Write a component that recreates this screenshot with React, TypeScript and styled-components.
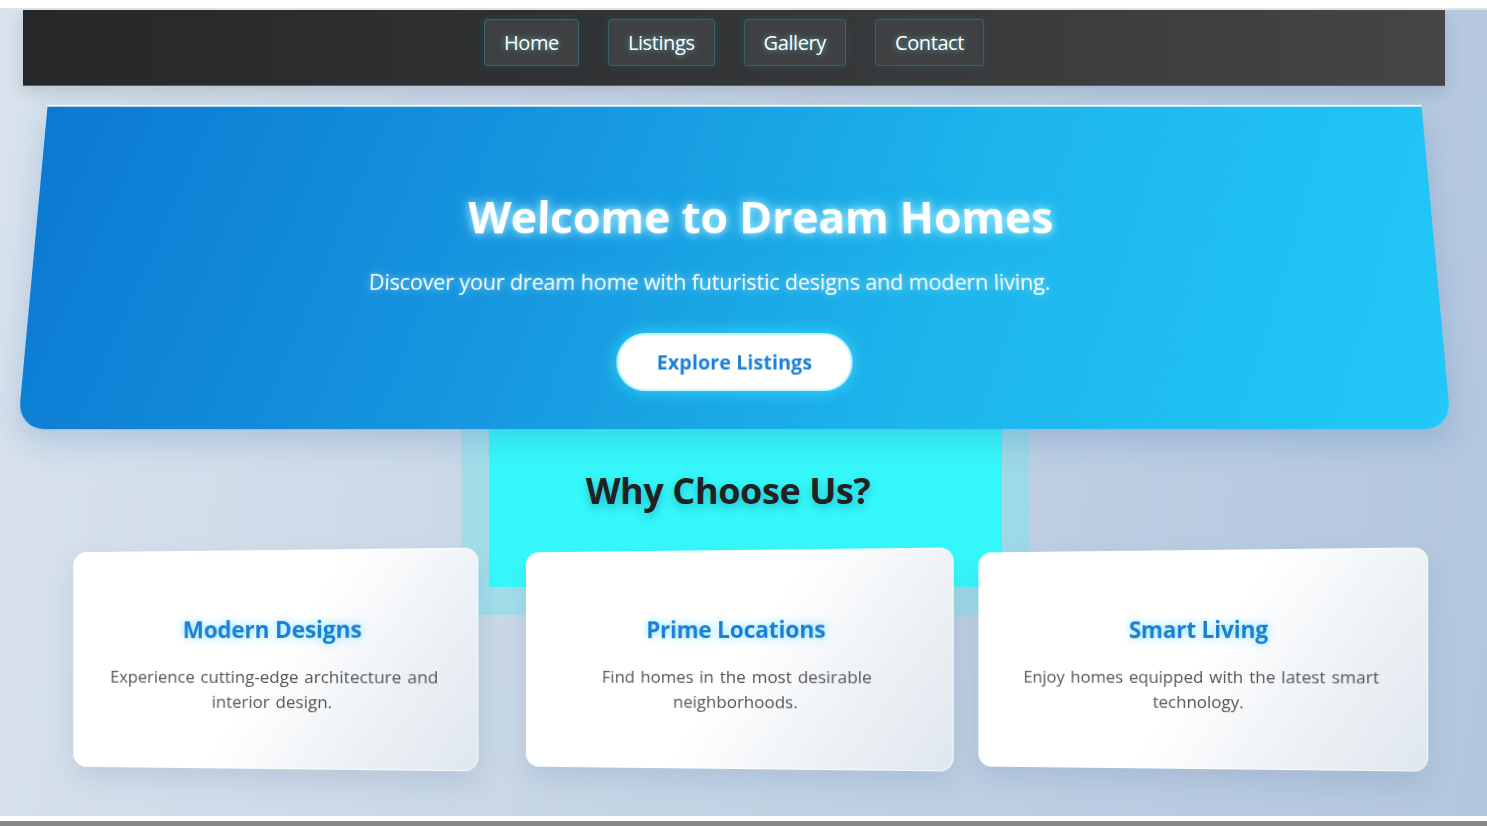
import React from "react";
import styled, { createGlobalStyle } from "styled-components";

const GlobalStyle = createGlobalStyle`
  html, body {
    margin: 0;
    padding: 0;
    background: #ffffff;
    font-family: "Open Sans", "Noto Sans", Arial, sans-serif;
    overflow: hidden;
  }
  * { box-sizing: border-box; }
`;

const Page = styled.div`
  margin-top: 8px;
  border-top: 2px solid #e2e3e4;
  min-height: 808px;
  padding: 0 42px 0 23px;
  background: linear-gradient(100deg, #d9e3ed 0%, #c6d5e5 45%, #b2c6de 100%);
  overflow: hidden;
`;

const Nav = styled.nav`
  height: 76px;
  display: flex;
  justify-content: center;
  align-items: flex-start;
  gap: 29px;
  padding-top: 9px;
  background: linear-gradient(90deg, #252728 0%, #333536 50%, #444546 100%);
  border-bottom: 1px solid #5d5e60;
  box-shadow: 0 6px 16px rgba(40, 60, 90, 0.18);
`;

const NavButton = styled.a`
  height: 47px;
  display: flex;
  align-items: center;
  padding: 0 19px;
  background: #3f4041;
  border: 1px solid rgba(40, 190, 210, 0.28);
  border-radius: 4px;
  box-shadow: 0 0 8px rgba(0, 220, 255, 0.12);
  color: #ffffff;
  font-size: 20px;
  font-weight: 500;
  letter-spacing: -0.4px;
  text-decoration: none;
  text-shadow: 0 0 6px rgba(120, 240, 255, 0.7);
`;

const Hero = styled.section`
  position: relative;
  z-index: 2;
  width: 1403px;
  height: 327px;
  margin: 14px auto 0;
  display: flex;
  flex-direction: column;
  align-items: center;
  padding-top: 87px;
  background: linear-gradient(110deg, #0b79d2 0%, #1696df 35%, #1db5ec 65%, #22c8f7 100%);
  border-top: 2px solid rgba(255, 255, 255, 0.95);
  border-radius: 0 0 26px 26px;
  box-shadow: 0 12px 30px rgba(40, 100, 170, 0.22);
  transform: perspective(1000px) rotateX(7.5deg);
`;

const HeroTitle = styled.h1`
  margin: 0;
  padding-left: 52px;
  color: #ffffff;
  font-size: 45px;
  font-weight: 700;
  line-height: 54px;
  letter-spacing: -0.3px;
  text-shadow: 0 0 10px rgba(200, 250, 255, 0.9), 0 0 20px rgba(120, 230, 255, 0.5);
`;

const HeroText = styled.p`
  margin: 24px 0 0;
  padding-right: 50px;
  color: #ffffff;
  font-size: 21.6px;
  line-height: 29px;
  letter-spacing: -0.2px;
  text-shadow: 0 0 8px rgba(200, 250, 255, 0.7);
`;

const HeroButton = styled.button`
  margin-top: 37px;
  width: 233px;
  height: 57px;
  border: 2px solid #c9f6ff;
  border-radius: 30px;
  background: #ffffff;
  color: #1a7fd6;
  font-family: inherit;
  font-size: 19.4px;
  font-weight: 700;
  letter-spacing: 0.1px;
  box-shadow: 0 0 16px rgba(60, 230, 255, 0.8);
  cursor: pointer;
`;

const Features = styled.section`
  position: relative;
  z-index: 1;
  width: 569px;
  margin: -28px 0 0 438px;
  border: 28px solid rgba(130, 225, 235, 0.55);
  background: #35f8fa;
  background-clip: padding-box;
  padding: 42px 35px 75px 0;
  text-align: center;
`;

const FeaturesTitle = styled.h2`
  margin: 0;
  color: #212121;
  font-size: 36px;
  font-weight: 700;
  line-height: 43px;
  letter-spacing: -0.4px;
  text-shadow: 0 4px 10px rgba(0, 90, 120, 0.38);
`;

const CardRow = styled.div`
  position: relative;
  z-index: 3;
  display: flex;
  align-items: flex-start;
  margin-top: -65px;
  padding-left: 45px;
`;

const Card = styled.div<{ $w: number; $gap: number }>`
  width: ${(p) => p.$w}px;
  height: 219px;
  margin-left: ${(p) => p.$gap}px;
  padding: 65px 28px 0;
  border-radius: 14px;
  text-align: center;
  background: linear-gradient(125deg, #ffffff 0%, #ffffff 50%, #eef2f6 75%, #dfe6ee 100%);
  box-shadow: 0 12px 26px rgba(60, 90, 140, 0.14), inset 0 0 0 1px rgba(255, 255, 255, 0.7);
  transform: perspective(1000px) rotateY(-6deg);
`;

const CardTitle = styled.h3`
  margin: 0;
  color: #1a7fd4;
  font-size: 22.8px;
  font-weight: 700;
  line-height: 30px;
  letter-spacing: -0.2px;
  text-shadow: 0 0 8px rgba(0, 200, 255, 0.55);
`;

const CardText = styled.p`
  margin: 19px 0 0;
  color: #555555;
  font-size: 17px;
  line-height: 25px;
  font-weight: 400;
  word-spacing: 1.5px;
`;

const Footer = styled.footer`
  margin-top: 5px;
  height: 60px;
  background: #878787;
`;

const navItems = ["Home", "Listings", "Gallery", "Contact"];

const cards = [
  {
    title: "Modern Designs",
    text: "Experience cutting-edge architecture and interior design.",
    w: 407,
    gap: 0,
  },
  {
    title: "Prime Locations",
    text: "Find homes in the most desirable neighborhoods.",
    w: 430,
    gap: 45,
  },
  {
    title: "Smart Living",
    text: "Enjoy homes equipped with the latest smart technology.",
    w: 452,
    gap: 22,
  },
];

export default function App() {
  return (
    <>
      <GlobalStyle />
      <Page>
        <Nav>
          {navItems.map((item) => (
            <NavButton key={item} href="#">
              {item}
            </NavButton>
          ))}
        </Nav>
        <Hero>
          <HeroTitle>Welcome to Dream Homes</HeroTitle>
          <HeroText>Discover your dream home with futuristic designs and modern living.</HeroText>
          <HeroButton>Explore Listings</HeroButton>
        </Hero>
        <Features>
          <FeaturesTitle>Why Choose Us?</FeaturesTitle>
        </Features>
        <CardRow>
          {cards.map((c) => (
            <Card key={c.title} $w={c.w} $gap={c.gap}>
              <CardTitle>{c.title}</CardTitle>
              <CardText>{c.text}</CardText>
            </Card>
          ))}
        </CardRow>
      </Page>
      <Footer />
    </>
  );
}
